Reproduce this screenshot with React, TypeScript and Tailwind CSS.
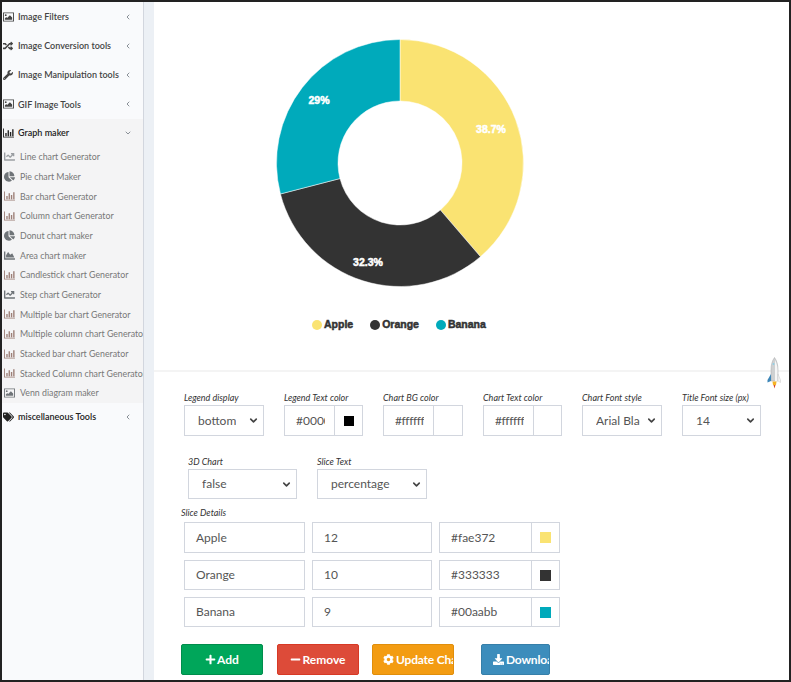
import React from 'react';
import { ChevronLeft, ChevronDown } from 'lucide-react';
import { FaRandom, FaWrench, FaTags, FaChartLine, FaChartPie, FaChartArea, FaPlus, FaMinus, FaCog, FaDownload } from 'react-icons/fa';

// donut geometry
const CX = 125;
const CY = 125;
const R = 123.5;
const r = 62;

const slices = [
  { name: 'Apple', value: '12', color: '#fae372' },
  { name: 'Orange', value: '10', color: '#333333' },
  { name: 'Banana', value: '9', color: '#00aabb' },
];

const arcPath = (start: number, end: number) => {
  const p = (rad: number, deg: number) => {
    const a = ((deg - 90) * Math.PI) / 180;
    return `${(CX + rad * Math.cos(a)).toFixed(2)} ${(CY + rad * Math.sin(a)).toFixed(2)}`;
  };
  const large = end - start > 180 ? 1 : 0;
  return `M${p(R, start)} A${R} ${R} 0 ${large} 1 ${p(R, end)} L${p(r, end)} A${r} ${r} 0 ${large} 0 ${p(r, start)} Z`;
};

const ImageIcon = ({ className }: { className: string }) => (
  <svg viewBox="0 0 12 10" className={className} fill="currentColor">
    <path fillRule="evenodd" d="M0 0h12v10H0zM1 1v8h10V1z" />
    <circle cx="3" cy="3" r="1" />
    <path d="M2 8V6.500L3.500 5l1 1L7.500 3 10 5.500V8z" />
  </svg>
);

const BarIcon = ({ className }: { className: string }) => (
  <svg viewBox="0 0 12 10" className={className} fill="currentColor">
    <path d="M0 0h1v9h11v1H0zM2.500 5h1.500v3.500H2.500zM5 2h1.500v6.500H5zM7.500 4H9v4.500H7.500zM10 1h1.500v7.500H10z" />
  </svg>
);

const Rocket = () => (
  <svg viewBox="0 0 14 32" className="w-[14px] h-[32px]">
    <path d="M7.500 0.500C5 4 4 8 4 13v11h7V13C11 8 10 4 7.500 0.500z" fill="#cfd1d2" stroke="#a5a7a9" strokeWidth="0.500" />
    <path d="M8 3c1.500 3 2.500 6 2.500 10v11H8z" fill="#f6f6f6" />
    <path d="M4 17L0.500 23v2.500L4 24z" fill="#3d86b8" />
    <path d="M11 17l2.500 6v2.500L11 24z" fill="#f6f6f6" stroke="#c8c8c8" strokeWidth="0.500" />
    <circle cx="6.500" cy="7" r="1" fill="#8fd0e8" />
    <path d="M5.500 24.500h4L9 28H6z" fill="#f5b324" />
    <path d="M6.500 28h2l-1 3.500z" fill="#d9482f" />
  </svg>
);

type MenuItem = { label: string; icon: React.ReactNode };

const iconCls = 'w-[11px] h-[10px]';
const subIconCls = 'w-[11px] h-[10px] text-[#9c7f77]';
const greyIconCls = 'w-[11px] h-[11px] text-[#6f7478]';

const topItems: MenuItem[] = [
  { label: 'Image Filters', icon: <ImageIcon className={iconCls} /> },
  { label: 'Image Conversion tools', icon: <FaRandom className="w-[10px] h-[10px]" /> },
  { label: 'Image Manipulation tools', icon: <FaWrench className="w-[10px] h-[10px]" /> },
  { label: 'GIF Image Tools', icon: <ImageIcon className={iconCls} /> },
];

const subItems: MenuItem[] = [
  { label: 'Line chart Generator', icon: <FaChartLine className="w-[11px] h-[11px] text-[#9a9ea2]" /> },
  { label: 'Pie chart Maker', icon: <FaChartPie className={greyIconCls} /> },
  { label: 'Bar chart Generator', icon: <BarIcon className={subIconCls} /> },
  { label: 'Column chart Generator', icon: <BarIcon className={subIconCls} /> },
  { label: 'Donut chart maker', icon: <FaChartPie className={greyIconCls} /> },
  { label: 'Area chart maker', icon: <FaChartArea className={greyIconCls} /> },
  { label: 'Candlestick chart Generator', icon: <BarIcon className={subIconCls} /> },
  { label: 'Step chart Generator', icon: <FaChartLine className={greyIconCls} /> },
  { label: 'Multiple bar chart Generator', icon: <BarIcon className={subIconCls} /> },
  { label: 'Multiple column chart Generator', icon: <BarIcon className={subIconCls} /> },
  { label: 'Stacked bar chart Generator', icon: <BarIcon className={subIconCls} /> },
  { label: 'Stacked Column chart Generator', icon: <BarIcon className={subIconCls} /> },
  { label: 'Venn diagram maker', icon: <ImageIcon className="w-[11px] h-[10px] text-[#6f7478]" /> },
];

const TopRow = ({ item }: { item: MenuItem }) => (
  <div className="h-[29.250px] flex items-center pl-[1px] pr-[11px] text-[#444]">
    <span className="w-[15px] flex justify-start shrink-0">{item.icon}</span>
    <span className="flex-1 whitespace-nowrap font-semibold text-[9px]">{item.label}</span>
    <ChevronLeft className="w-[8px] h-[8px] text-[#8a9097]" strokeWidth={3} />
  </div>
);

const Label = ({ children, className = '' }: { children: React.ReactNode; className?: string }) => (
  <div className={`text-[9px] leading-[10px] italic text-[#333] whitespace-nowrap ${className}`}>{children}</div>
);

const SelectBox = ({ value, w, h }: { value: string; w: string; h: string }) => (
  <div className={`${w} ${h} pl-[13px] border border-[#d2d6de] flex items-center justify-between pr-[4px] text-[12px] text-[#555] overflow-hidden`}>
    <span className="overflow-hidden whitespace-nowrap">{value}</span>
    <ChevronDown className="w-[11px] h-[11px] shrink-0 ml-[6px] text-[#444]" strokeWidth={3.5} />
  </div>
);

const ColorGroup = ({ value, swatch, w }: { value: string; swatch?: boolean; w: string }) => (
  <div className={`${w} h-[31px] border border-[#d2d6de] flex text-[12px] text-[#555]`}>
    <div className="w-[50px] pl-[11px] flex items-center whitespace-nowrap border-r border-[#d2d6de]">
      <span className={`block w-[29px] overflow-hidden ${swatch ? '' : 'tracking-[-0.4px]'}`}>{value}</span>
    </div>
    <div className="flex-1 flex items-center justify-center">
      {swatch && <div className="w-[10px] h-[10px] bg-black" />}
    </div>
  </div>
);

const topControls = [
  { label: 'Legend display', el: <SelectBox value="bottom" w="w-[80px]" h="h-[31px]" /> },
  { label: 'Legend Text color', el: <ColorGroup value="#000000" swatch w="w-[79px]" /> },
  { label: 'Chart BG color', el: <ColorGroup value="#ffffff" w="w-[80px]" /> },
  { label: 'Chart Text color', el: <ColorGroup value="#ffffff" w="w-[79px]" /> },
  { label: 'Chart Font style', el: <SelectBox value="Arial Black" w="w-[80px]" h="h-[31px]" /> },
  { label: 'Title Font size (px)', el: <SelectBox value="14" w="w-[79px]" h="h-[31px]" /> },
];

const btnCls = 'h-[31px] rounded-[2px] border flex items-center overflow-hidden whitespace-nowrap text-white text-[12px] font-bold';

export default function App() {
  return (
    <div className="w-[791px] h-[682px] bg-white border-2 border-[#222] overflow-hidden flex font-['Lato',sans-serif]">
      {/* sidebar */}
      <aside className="w-[142px] shrink-0 h-full bg-[#f9fafc] border-r border-[#d2d6de]">
        {topItems.map((it) => <TopRow key={it.label} item={it} />)}
        <div className="bg-[#f4f4f5] h-[284px]">
          <div className="h-[28px] flex items-center pl-[1px] pr-[11px] text-[#222]">
            <span className="w-[15px] shrink-0"><BarIcon className={iconCls} /></span>
            <span className="flex-1 font-semibold text-[9px]">Graph maker</span>
            <ChevronDown className="w-[8px] h-[8px] text-[#8a9097]" strokeWidth={3} />
          </div>
          {subItems.map((it) => (
            <div key={it.label} className="h-[19.680px] flex items-center pl-[2px] text-[8.800px] text-[#777] whitespace-nowrap overflow-hidden">
              <span className="w-[16px] shrink-0">{it.icon}</span>
              {it.label}
            </div>
          ))}
        </div>
        <div className="h-[28px] flex items-center pl-[1px] pr-[11px] text-[#222]">
          <span className="w-[15px] shrink-0"><FaTags className="w-[11px] h-[10px]" /></span>
          <span className="flex-1 whitespace-nowrap font-semibold text-[9px]">miscellaneous Tools</span>
          <ChevronLeft className="w-[8px] h-[8px] text-[#8a9097]" strokeWidth={3} />
        </div>
      </aside>
      <div className="w-[10px] shrink-0 bg-[#ecf0f5]" />

      {/* main */}
      <main className="flex-1 min-w-0 flex flex-col">
        <div className="h-[370px] shrink-0 border-b-2 border-[#f4f4f4] flex flex-col items-start relative">
          <svg viewBox="0 0 250 250" className="w-[250px] h-[250px] mt-[36px] ml-[121px]" style={{ fontFamily: "'Liberation Sans', sans-serif" }}>
            <path d={arcPath(0, 139.35)} fill="#fae372" stroke="#fff" strokeWidth="0.500" />
            <path d={arcPath(139.35, 255.48)} fill="#333333" stroke="#fff" strokeWidth="0.500" />
            <path d={arcPath(255.48, 360)} fill="#00aabb" stroke="#fff" strokeWidth="0.500" />
            <text x="216" y="95" textAnchor="middle" fill="#fff" fontSize="10.500" fontWeight="900" stroke="#fff" strokeWidth="0.500">38.7%</text>
            <text x="93" y="228" textAnchor="middle" fill="#fff" fontSize="10.500" fontWeight="900" stroke="#fff" strokeWidth="0.500">32.3%</text>
            <text x="44" y="66" textAnchor="middle" fill="#fff" fontSize="10.500" fontWeight="900" stroke="#fff" strokeWidth="0.500">29%</text>
          </svg>
          <div className="mt-[29px] ml-[158px] flex items-center gap-[17px] text-[10.500px] font-black text-[#333] font-['Liberation_Sans',sans-serif]">
            {slices.map((s) => (
              <div key={s.name} className="flex items-center gap-[2px]">
                <span className="w-[10px] h-[10px] rounded-full" style={{ backgroundColor: s.color }} />
                <span className="[-webkit-text-stroke:0.500px_#333]">{s.name}</span>
              </div>
            ))}
          </div>
          <div className="absolute right-[8px] top-[355px]"><Rocket /></div>
        </div>

        <div className="pl-[30px] pt-[21px] flex gap-[20px]">
          {topControls.map((c) => (
            <div key={c.label}>
              <Label className="mb-[2px]">{c.label}</Label>
              {c.el}
            </div>
          ))}
        </div>

        <div className="pl-[34px] pt-[21px] flex gap-[20px]">
          <div>
            <Label className="mb-[2px]">3D Chart</Label>
            <SelectBox value="false" w="w-[109px]" h="h-[30px]" />
          </div>
          <div>
            <Label className="mb-[2px]">Slice Text</Label>
            <SelectBox value="percentage" w="w-[110px]" h="h-[30px]" />
          </div>
        </div>

        <Label className="pl-[27px] pt-[9px]">Slice Details</Label>
        <div className="pl-[30px] pt-[4px] flex flex-col gap-[7px]">
          {slices.map((s, i) => (
            <div key={s.name} className={`flex gap-[7px] text-[12px] text-[#555] ${i === 0 ? 'h-[31px]' : 'h-[30px]'}`}>
              <div className="w-[121px] border border-[#d2d6de] pl-[11px] flex items-center">{s.name}</div>
              <div className="w-[120px] border border-[#d2d6de] pl-[11px] flex items-center">{s.value}</div>
              <div className="w-[121px] border border-[#d2d6de] flex">
                <div className="w-[92px] pl-[11px] flex items-center border-r border-[#d2d6de]">{s.color}</div>
                <div className="flex-1 flex items-center justify-center">
                  <div className="w-[11px] h-[11px]" style={{ backgroundColor: s.color }} />
                </div>
              </div>
            </div>
          ))}
        </div>

        <div className="pl-[27px] pt-[17px] flex">
          <div className={`${btnCls} w-[82px] justify-center bg-[#00a65a] border-[#008d4c]`}>
            <FaPlus className="w-[11px] h-[11px] mr-[1px]" />Add
          </div>
          <div className={`${btnCls} w-[82px] ml-[14px] justify-center bg-[#dd4b39] border-[#d73925]`}>
            <FaMinus className="w-[11px] h-[11px] mr-[1px]" />Remove
          </div>
          <div className={`${btnCls} w-[82px] ml-[13px] pl-[10px] bg-[#f39c12] border-[#e08e0b] tracking-[-0.2px]`}>
            <FaCog className="w-[11px] h-[11px] mr-[2px] shrink-0" />Update Chart
          </div>
          <div className={`${btnCls} w-[69px] ml-[27px] pl-[11px] bg-[#3c8dbc] border-[#367fa9] tracking-[-0.2px]`}>
            <FaDownload className="w-[11px] h-[11px] mr-[2px] shrink-0" />Download
          </div>
        </div>
      </main>
    </div>
  );
}
